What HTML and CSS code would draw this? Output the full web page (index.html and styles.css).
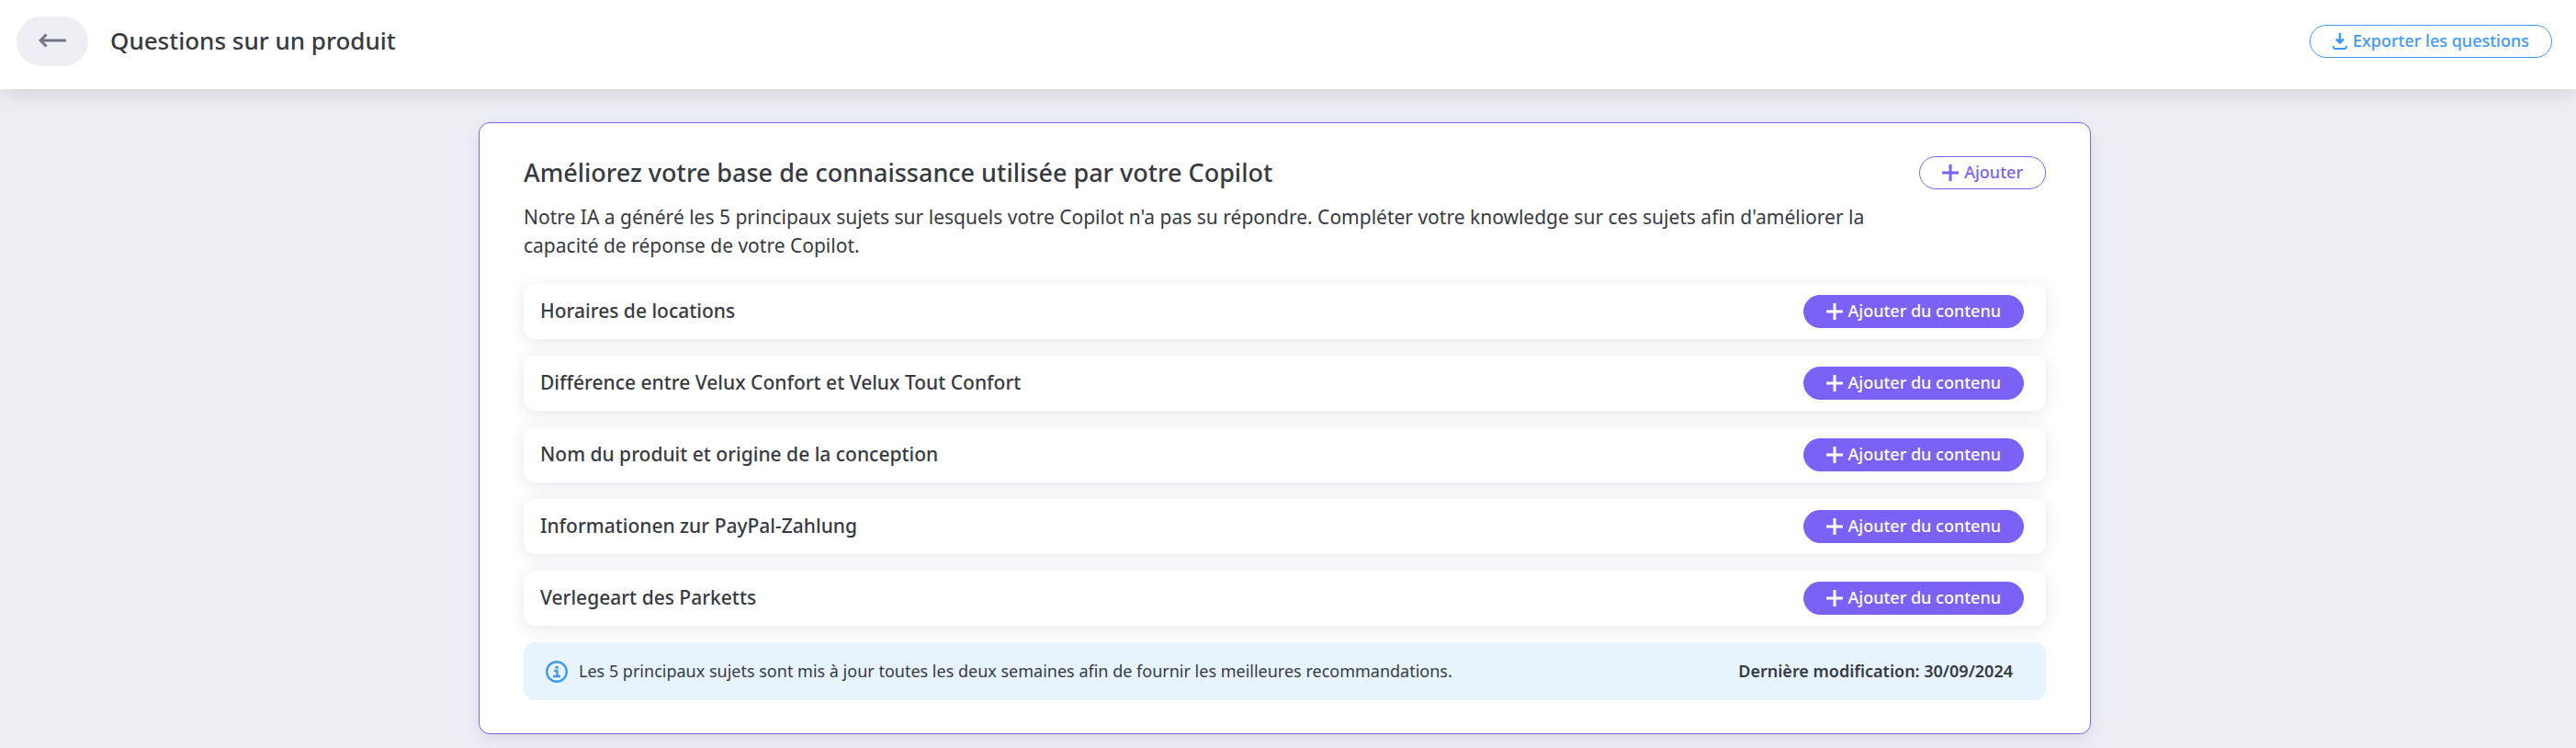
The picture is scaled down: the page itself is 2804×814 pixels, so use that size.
FILE: index.html
```html
<!DOCTYPE html>
<html lang="fr">
<head>
  <meta charset="UTF-8">
  <meta name="viewport" content="width=device-width, initial-scale=1.0">
  <title>Questions sur un produit</title>
  <link rel="stylesheet" href="styles.css">
</head>
<body>
  <svg class="sprite" aria-hidden="true">
    <symbol id="icon-plus" viewBox="0 0 18 18">
      <path d="M9 0v18M0 9h18" fill="none" stroke="currentColor" stroke-width="3"/>
    </symbol>
  </svg>

  <header class="topbar">
    <button type="button" class="back-btn" aria-label="Retour">
      <svg width="30" height="16" viewBox="0 0 30 16">
        <path d="M2 8h28M8.500 1.500L2 8l6.500 6.500" fill="none" stroke="currentColor" stroke-width="3"/>
      </svg>
    </button>
    <h1>Questions sur un produit</h1>
    <button type="button" class="btn btn-export">
      <svg width="16" height="18" viewBox="0 0 16 18">
        <path d="M8 0v10M4 6.500l4 4 4-4" fill="none" stroke="currentColor" stroke-width="2.500"/>
        <path d="M1 14v1q0 2 2 2h10q2 0 2-2v-1" fill="none" stroke="currentColor" stroke-width="2"/>
      </svg>
      <span>Exporter les questions</span>
    </button>
  </header>

  <main class="content">
    <section class="card">
      <div class="card-header">
        <h2>Améliorez votre base de connaissance utilisée par votre Copilot</h2>
        <button type="button" class="btn btn-outline"><svg class="plus"><use href="#icon-plus"/></svg><span>Ajouter</span></button>
      </div>
      <p class="intro">Notre IA a généré les 5 principaux sujets sur lesquels votre Copilot n'a pas su répondre. Compléter votre knowledge sur ces sujets afin d'améliorer la capacité de réponse de votre Copilot.</p>

      <ul class="topics">
        <li class="topic">
          <span>Horaires de locations</span>
          <button type="button" class="btn btn-primary"><svg class="plus"><use href="#icon-plus"/></svg><span>Ajouter du contenu</span></button>
        </li>
        <li class="topic">
          <span>Différence entre Velux Confort et Velux Tout Confort</span>
          <button type="button" class="btn btn-primary"><svg class="plus"><use href="#icon-plus"/></svg><span>Ajouter du contenu</span></button>
        </li>
        <li class="topic">
          <span>Nom du produit et origine de la conception</span>
          <button type="button" class="btn btn-primary"><svg class="plus"><use href="#icon-plus"/></svg><span>Ajouter du contenu</span></button>
        </li>
        <li class="topic">
          <span>Informationen zur PayPal-Zahlung</span>
          <button type="button" class="btn btn-primary"><svg class="plus"><use href="#icon-plus"/></svg><span>Ajouter du contenu</span></button>
        </li>
        <li class="topic">
          <span>Verlegeart des Parketts</span>
          <button type="button" class="btn btn-primary"><svg class="plus"><use href="#icon-plus"/></svg><span>Ajouter du contenu</span></button>
        </li>
      </ul>

      <div class="notice">
        <svg width="24" height="24" viewBox="0 0 24 24">
          <circle cx="12" cy="12" r="10.800" fill="none" stroke="currentColor" stroke-width="2.400"/>
          <circle cx="12" cy="7.200" r="1.700" fill="currentColor"/>
          <path d="M9 11h3.500v6M8 17h8" fill="none" stroke="currentColor" stroke-width="2.500"/>
        </svg>
        <span>Les 5 principaux sujets sont mis à jour toutes les deux semaines afin de fournir les meilleures recommandations.</span>
        <strong>Dernière modification: 30/09/2024</strong>
      </div>
    </section>
  </main>
</body>
</html>
```
FILE: styles.css
```css
* {
  box-sizing: border-box;
}

body {
  margin: 0;
  min-height: 100vh;
  font-family: "Noto Sans", sans-serif;
  color: #373a41;
  background-color: #eeeff5;
}

.sprite {
  display: none;
}

.topbar {
  position: relative;
  display: flex;
  align-items: center;
  padding: 18px 26px 25px 18px;
  background-color: #fff;
  box-shadow: 0 3px 24px rgba(0, 0, 0, 0.15);
}

h1,
h2 {
  margin: 0;
  line-height: 36px;
  font-weight: 500;
}

h1 {
  padding-bottom: 2px;
  font-size: 26px;
}

h2 {
  font-size: 27px;
}

.back-btn {
  display: flex;
  align-items: center;
  justify-content: center;
  width: 78px;
  height: 54px;
  margin-right: 24px;
  padding: 0 0 3px;
  border: none;
  border-radius: 27px;
  background-color: #eeeff5;
  color: #707789;
  cursor: pointer;
}

.btn {
  display: inline-flex;
  flex-shrink: 0;
  align-items: center;
  gap: 6px;
  height: 36px;
  padding: 0 24px;
  border: 1px solid;
  border-radius: 18px;
  font-family: inherit;
  font-size: 18px;
  line-height: 24px;
  font-weight: 500;
  background-color: #fff;
  cursor: pointer;
}

.btn span,
.topic > span,
.notice span,
.notice strong {
  padding-bottom: 2px;
}

.btn-export {
  margin-left: auto;
  color: #4098f8;
}

.btn-outline {
  color: #7c61f6;
}

.btn-primary {
  color: #fff;
  background-color: #7c61f6;
  border-color: #7c61f6;
}

.plus {
  width: 18px;
  height: 18px;
}

.content {
  padding: 36px 7px 15px 0;
}

.card {
  max-width: 1755px;
  margin: 0 auto;
  padding: 36px 48px;
  border: 1px solid #7c61f6;
  border-radius: 12px;
  background-color: #fff;
  box-shadow: 0 6px 18px rgba(60, 60, 130, 0.12);
}

.card-header {
  display: flex;
  align-items: center;
  justify-content: space-between;
}

.intro {
  max-width: 1500px;
  margin: 15px 0 26px;
  font-size: 21px;
  line-height: 31px;
}

.topics {
  display: flex;
  flex-direction: column;
  gap: 18px;
  margin: 0 0 18px;
  padding: 0;
  list-style: none;
}

.topic {
  display: flex;
  align-items: center;
  justify-content: space-between;
  padding: 12px 24px 12px 18px;
  border-radius: 12px;
  font-size: 21px;
  font-weight: 500;
  background-color: #fff;
  box-shadow: 0 3px 18px rgba(60, 60, 110, 0.12);
}

.notice {
  display: flex;
  align-items: center;
  gap: 12px;
  min-height: 63px;
  padding: 12px 36px 12px 24px;
  border-radius: 12px;
  font-size: 18px;
  background-color: #e7f4fe;
}

.notice svg {
  flex-shrink: 0;
  color: #4098f8;
}

.notice strong {
  margin-left: auto;
  font-weight: 600;
}
```
